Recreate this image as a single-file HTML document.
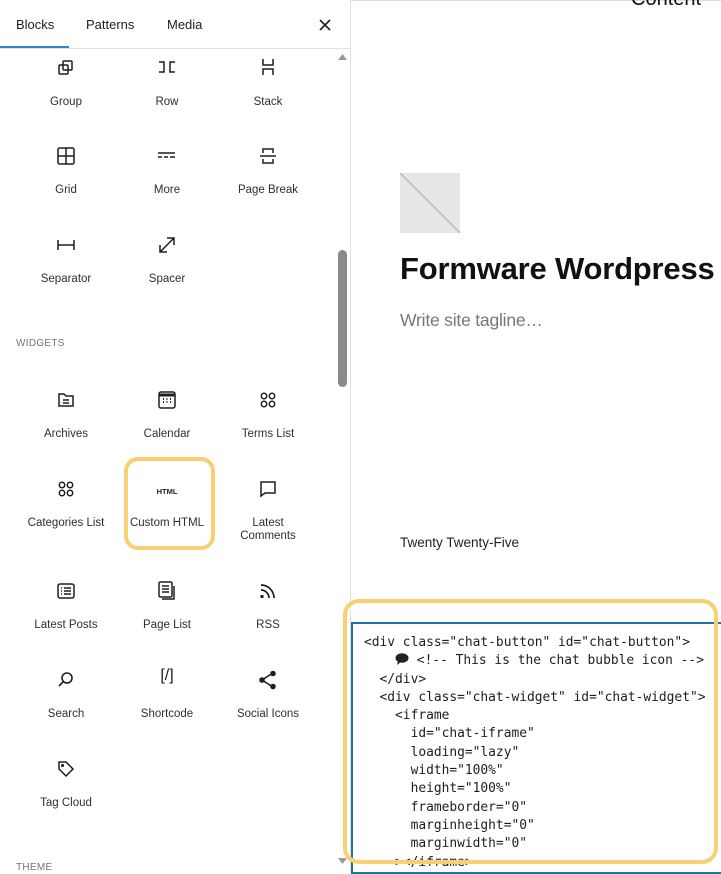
<!DOCTYPE html>
<html><head><meta charset="utf-8"><style>
*{box-sizing:border-box;margin:0;padding:0}
body{width:721px;height:872px;overflow:hidden;background:#fff;font-family:"Liberation Sans",sans-serif;position:relative;color:#1e1e1e}
.side{position:absolute;left:0;top:0;width:351px;height:872px;border-right:1px solid #e0e0e0;overflow:hidden}
.tabs{position:absolute;left:0;top:0;width:350px;height:49px;border-bottom:1px solid #e0e0e0;font-size:13px}
.tabs span{position:absolute;top:17px}
.ul{position:absolute;left:0;top:46px;width:69px;height:2px;background:#3582c4}
.it{position:absolute;width:100px;text-align:center;font-size:11.5px;color:#2f2f2f;line-height:13px}
.it svg{position:absolute;left:40px;top:0}
.it div{position:absolute;top:38px;left:0;width:100px}
.hd{position:absolute;left:16px;font-size:10px;color:#757575;letter-spacing:.3px}
.sb{position:absolute;left:338px;top:250px;width:9px;height:137px;background:#8a8a8a;border-radius:5px}
pre{position:absolute;left:364px;top:634px;font-family:"DejaVu Sans Mono","Liberation Mono",monospace;font-size:12.9px;line-height:18.3px;color:#1e1e1e}
</style></head><body>
<div style="position:absolute;left:350px;top:0;width:371px;height:1px;background:#ddd"></div>
<div class="side">
<div class="tabs"><span style="left:16px">Blocks</span><span style="left:86px">Patterns</span><span style="left:167px">Media</span>
<svg style="position:absolute;left:319px;top:19px" width="12" height="12" viewBox="0 0 12 12"><path d="M1 1L11 11M11 1L1 11" stroke="#1e1e1e" stroke-width="1.6"/></svg>
<div class="ul"></div></div>
<svg style="position:absolute;left:338px;top:54px" width="9" height="6"><path d="M0 6L4.5 0L9 6Z" fill="#999"/></svg>
<svg style="position:absolute;left:338px;top:858px" width="9" height="6"><path d="M0 0L4.5 6L9 0Z" fill="#999"/></svg>
<div class="sb"></div>

<div class="it" style="left:16px;top:58px"><svg width="20" height="20" viewBox="0 0 20 20" fill="none" stroke="#1e1e1e" stroke-width="1.5"><rect x="3" y="7" width="9" height="9" rx="1"/><rect x="7" y="3" width="9" height="9" rx="1"/></svg><div>Group</div></div>
<div class="it" style="left:117px;top:58px"><svg width="20" height="20" viewBox="0 0 20 20" fill="none" stroke="#1e1e1e" stroke-width="1.5"><path d="M2 4h5v10H2M18 4h-5v10h5"/></svg><div>Row</div></div>
<div class="it" style="left:218px;top:58px"><svg width="20" height="20" viewBox="0 0 20 20" fill="none" stroke="#1e1e1e" stroke-width="1.5"><path d="M5 1v6h10V1M5 17v-6h10v6"/></svg><div>Stack</div></div>

<div class="it" style="left:16px;top:146px"><svg width="20" height="20" viewBox="0 0 20 20" fill="none" stroke="#1e1e1e" stroke-width="1.5"><rect x="2" y="2" width="16" height="16" rx="1.5"/><path d="M10 2v16M2 10h16"/></svg><div>Grid</div></div>
<div class="it" style="left:117px;top:146px"><svg width="20" height="20" viewBox="0 0 20 20" fill="none" stroke="#1e1e1e" stroke-width="1.5"><path d="M1 7h17M1 11h4M7 11h4M13 11h5"/></svg><div>More</div></div>
<div class="it" style="left:218px;top:146px"><svg width="20" height="20" viewBox="0 0 20 20" fill="none" stroke="#1e1e1e" stroke-width="1.5"><path d="M5 7V3h10v4M5 13v4h10v-4M2 10h16"/></svg><div>Page Break</div></div>

<div class="it" style="left:16px;top:235px"><svg width="20" height="20" viewBox="0 0 20 20" fill="none" stroke="#1e1e1e" stroke-width="1.5"><path d="M2 5v10M18 5v10M2 10h16"/></svg><div>Separator</div></div>
<div class="it" style="left:117px;top:235px"><svg width="20" height="20" viewBox="0 0 20 20" fill="none" stroke="#1e1e1e" stroke-width="1.5"><path d="M3 17L17 3M10 3h7v7M3 10v7h7"/></svg><div>Spacer</div></div>

<div class="hd" style="top:338px">WIDGETS</div>

<div class="it" style="left:16px;top:390px"><svg width="20" height="20" viewBox="0 0 20 20" fill="none" stroke="#1e1e1e" stroke-width="1.5"><path d="M3 4h5l2 2h7v10H3z"/><path d="M7 10h6M7 13h6"/></svg><div>Archives</div></div>
<div class="it" style="left:117px;top:390px"><svg width="20" height="20" viewBox="0 0 20 20" fill="none" stroke="#1e1e1e" stroke-width="1.5"><rect x="2" y="2" width="16" height="16" rx="2"/><path d="M2 5h16" stroke-width="3"/><path d="M6 9h1M9.5 9h1M13 9h1M6 12h1M9.5 12h1M13 12h1" stroke-width="2"/></svg><div>Calendar</div></div>
<div class="it" style="left:218px;top:390px"><svg width="20" height="20" viewBox="0 0 20 20" fill="none" stroke="#1e1e1e" stroke-width="1.5"><circle cx="6" cy="6" r="2.7"/><circle cx="14" cy="6" r="2.7"/><circle cx="6" cy="14" r="2.7"/><circle cx="14" cy="14" r="2.7"/></svg><div>Terms List</div></div>

<div class="it" style="left:16px;top:479px"><svg width="20" height="20" viewBox="0 0 20 20" fill="none" stroke="#1e1e1e" stroke-width="1.5"><circle cx="6" cy="6" r="2.7"/><circle cx="14" cy="6" r="2.7"/><circle cx="6" cy="14" r="2.7"/><circle cx="14" cy="14" r="2.7"/></svg><div>Categories List</div></div>
<div class="it" style="left:117px;top:479px"><div style="top:6px;font-size:7.5px;font-weight:bold;color:#1e1e1e">HTML</div><div>Custom HTML</div></div>
<div class="it" style="left:218px;top:479px"><svg width="20" height="20" viewBox="0 0 20 20" fill="none" stroke="#1e1e1e" stroke-width="1.5"><path d="M3 3h14v11H7l-4 3z"/></svg><div>Latest<br>Comments</div></div>

<div class="it" style="left:16px;top:581px"><svg width="20" height="20" viewBox="0 0 20 20" fill="none" stroke="#1e1e1e" stroke-width="1.5"><rect x="2" y="3" width="16" height="14" rx="2"/><path d="M5 7h1M8 7h7M5 10h1M8 10h7M5 13h1M8 13h7"/></svg><div>Latest Posts</div></div>
<div class="it" style="left:117px;top:581px"><svg width="20" height="20" viewBox="0 0 20 20" fill="none" stroke="#1e1e1e" stroke-width="1.5"><rect x="2" y="1" width="13" height="15" rx="1.5"/><path d="M5 5h7M5 8h7M5 11h7M17 5v13H5"/></svg><div>Page List</div></div>
<div class="it" style="left:218px;top:581px"><svg width="20" height="20" viewBox="0 0 20 20" fill="none" stroke="#1e1e1e" stroke-width="1.7"><path d="M3 4a13 13 0 0 1 13 13M3 9a8 8 0 0 1 8 8"/><rect x="2.5" y="14" width="3" height="3" fill="#1e1e1e" stroke="none"/></svg><div>RSS</div></div>

<div class="it" style="left:16px;top:670px"><svg width="20" height="20" viewBox="0 0 20 20" fill="none" stroke="#1e1e1e" stroke-width="1.6"><circle cx="11" cy="8" r="5"/><path d="M7.5 11.5L3 16"/></svg><div>Search</div></div>
<div class="it" style="left:117px;top:670px"><div style="top:-1px;font-size:16px;color:#1e1e1e">[/]</div><div>Shortcode</div></div>
<div class="it" style="left:218px;top:670px"><svg width="20" height="20" viewBox="0 0 20 20" fill="none" stroke="#1e1e1e" stroke-width="1.6"><path d="M15 3L4 10l11 7"/><circle cx="15" cy="3.5" r="2" fill="#1e1e1e"/><circle cx="4" cy="10" r="2" fill="#1e1e1e"/><circle cx="15" cy="16.5" r="2" fill="#1e1e1e"/></svg><div>Social Icons</div></div>

<div class="it" style="left:16px;top:759px"><svg width="20" height="20" viewBox="0 0 20 20" fill="none" stroke="#1e1e1e" stroke-width="1.5"><path d="M3 3h7l7 7-7 7-7-7z"/><circle cx="6.5" cy="6.5" r=".8" fill="#1e1e1e"/></svg><div>Tag Cloud</div></div>

<div class="hd" style="top:862px">THEME</div>
</div>

<div style="position:absolute;left:124px;top:457px;width:91px;height:93px;border:4px solid #f8cf72;border-radius:14px"></div>

<div style="position:absolute;left:631px;top:-12px;font-size:20px;color:#111">Content</div>
<svg style="position:absolute;left:400px;top:173px" width="60" height="60"><rect width="60" height="60" fill="#e6e6e6"/><path d="M0 0L60 60" stroke="#aaa" stroke-width="1"/></svg>
<div style="position:absolute;left:400px;top:251px;font-size:31px;font-weight:bold;color:#111;letter-spacing:-.2px;white-space:nowrap">Formware Wordpress</div>
<div style="position:absolute;left:400px;top:310px;font-size:17.5px;color:#777;letter-spacing:-.2px">Write site tagline…</div>
<div style="position:absolute;left:400px;top:535px;font-size:13.5px;color:#222">Twenty Twenty-Five</div>

<div style="position:absolute;left:351px;top:622px;width:372px;height:252px;border:2px solid #1f73a8"></div>
<pre>&lt;div class="chat-button" id="chat-button"&gt;
    <svg width="14" height="12" viewBox="0 0 14 12" style="vertical-align:-1px"><ellipse cx="7" cy="5" rx="6.5" ry="4.8" fill="#222"/><path d="M3 8L2 12L6 9Z" fill="#222"/></svg> &lt;!-- This is the chat bubble icon --&gt;
  &lt;/div&gt;
  &lt;div class="chat-widget" id="chat-widget"&gt;
    &lt;iframe
      id="chat-iframe"
      loading="lazy"
      width="100%"
      height="100%"
      frameborder="0"
      marginheight="0"
      marginwidth="0"
    &gt;&lt;/iframe&gt;</pre>
<div style="position:absolute;left:343px;top:599px;width:375px;height:265px;border:4px solid #f8cf72;border-radius:16px"></div>
</body></html>
